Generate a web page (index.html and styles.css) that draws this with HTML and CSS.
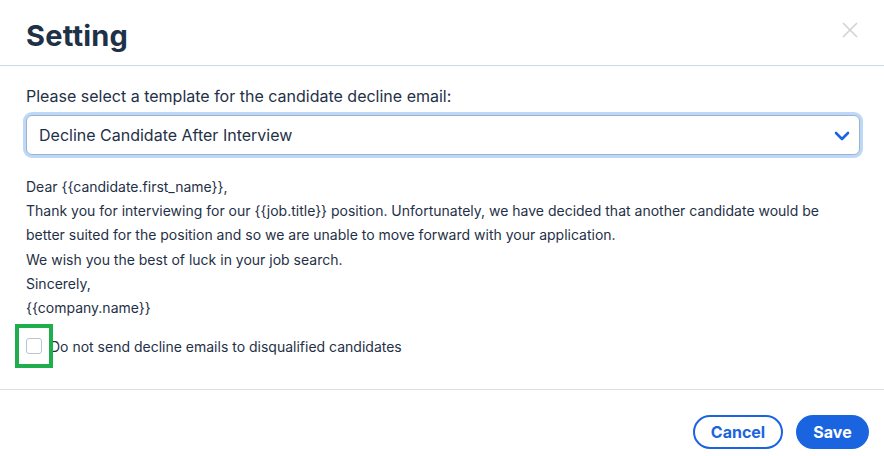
FILE: index.html
```html
<!DOCTYPE html>
<html lang="en">
<head>
    <meta charset="UTF-8">
    <title>Setting</title>
    <link rel="stylesheet" href="styles.css">
</head>
<body>
    <div class="modal">
        <div class="modal-header">
            <h1>Setting</h1>
            <button class="close-btn" aria-label="Close">
                <svg width="16" height="16" viewBox="0 0 16 16"><path d="M1 1L15 15M15 1L1 15" stroke="#cfd3d8" stroke-width="1.6" fill="none"/></svg>
            </button>
        </div>
        <div class="modal-body">
            <label class="field-label" for="template">Please select a template for the candidate decline email:</label>
            <div class="select-wrap">
                <select id="template">
                    <option>Decline Candidate After Interview</option>
                </select>
                <svg class="chevron" width="16" height="10" viewBox="0 0 16 10"><path d="M2 2L8 8L14 2" stroke="#1a64e0" stroke-width="2.6" fill="none" stroke-linecap="round" stroke-linejoin="round"/></svg>
            </div>
            <div class="preview">
                <p>Dear {{candidate.first_name}},</p>
                <p>Thank you for interviewing for our {{job.title}} position. Unfortunately, we have decided that another candidate would be better suited for the position and so we are unable to move forward with your application.</p>
                <p>We wish you the best of luck in your job search.</p>
                <p>Sincerely,</p>
                <p>{{company.name}}</p>
            </div>
            <label class="check-row">
                <input type="checkbox">
                <span>Do not send decline emails to disqualified candidates</span>
                <span class="check-highlight"></span>
            </label>
        </div>
        <div class="modal-footer">
            <button class="btn btn-outline">Cancel</button>
            <button class="btn btn-primary">Save</button>
        </div>
    </div>
</body>
</html>
```

FILE: styles.css
```css
body {
    margin: 0;
    font-family: Inter, "Liberation Sans", sans-serif;
    color: #1f3147;
    background: #fff;
}
.modal {
    width: 884px;
    height: 456px;
}
.modal-header {
    display: flex;
    justify-content: space-between;
    align-items: center;
    height: 66px;
    padding: 6px 26px 0;
    border-bottom: 1px solid #c9dbea;
    box-sizing: border-box;
}
.modal-header h1 {
    margin: 0;
    font-size: 29px;
    font-weight: 700;
    color: #1f3147;
    letter-spacing: 0.2px;
}
.close-btn {
    background: none;
    border: none;
    padding: 0;
    margin-bottom: 12px;
    cursor: pointer;
    display: flex;
}
.modal-body {
    padding: 20px 24px 0 26px;
}
.field-label {
    display: block;
    font-size: 16px;
    line-height: 20px;
    margin-bottom: 9px;
}
.select-wrap {
    position: relative;
}
select {
    appearance: none;
    width: 100%;
    height: 40px;
    padding: 0 12px;
    font-family: inherit;
    font-size: 16px;
    color: #1f3147;
    background: #fff;
    border: 1px solid #9fb3c8;
    border-radius: 6px;
    box-shadow: 0 0 0 3px #bdd8f8;
    outline: none;
}
.chevron {
    position: absolute;
    right: 10px;
    top: 16px;
    pointer-events: none;
}
.preview {
    margin-top: 20px;
    font-size: 14px;
    line-height: 24.2px;
}
.preview p {
    margin: 0;
}
.check-row {
    position: relative;
    display: flex;
    align-items: center;
    gap: 8px;
    height: 44px;
    margin-top: 4px;
    font-size: 14px;
}
.check-row input {
    appearance: none;
    margin: 0;
    width: 16px;
    height: 16px;
    border: 1px solid #b6c6d6;
    border-radius: 3px;
    background: #fff;
}
/* highlight frame drawn over the checkbox */
.check-highlight {
    position: absolute;
    left: -11px;
    top: 0;
    width: 30px;
    height: 36px;
    border: 4px solid #1fae4b;
}
.modal-footer {
    display: flex;
    justify-content: flex-end;
    gap: 13px;
    margin-top: 21px;
    padding: 25px 15px 0 0;
    border-top: 1px solid #e0e0e0;
}
.btn {
    height: 34px;
    border-radius: 17px;
    font-family: inherit;
    font-size: 16px;
    font-weight: 700;
    cursor: pointer;
}
.btn-outline {
    width: 90px;
    background: #fff;
    color: #1a64e0;
    border: 2px solid #1a64e0;
}
.btn-primary {
    width: 73px;
    background: #1a64e0;
    color: #fff;
    border: none;
}
```
